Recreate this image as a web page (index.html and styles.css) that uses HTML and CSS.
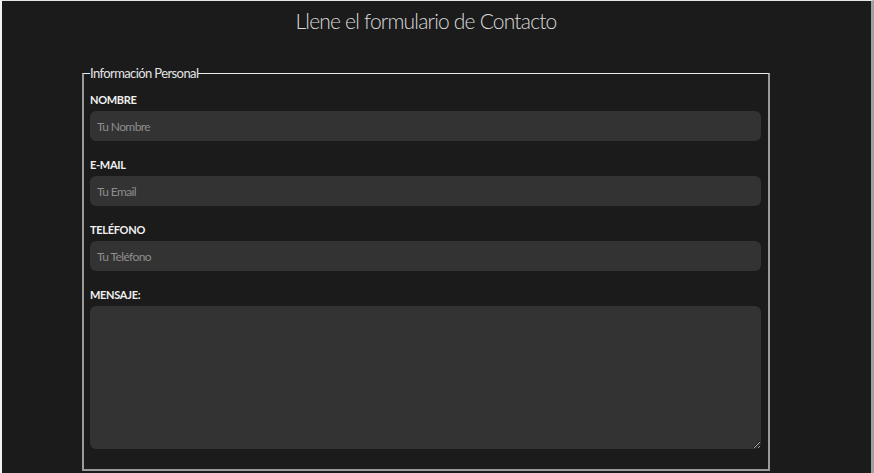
FILE: index.html
```html
<!DOCTYPE html>
<html lang="es">
<head>
<meta charset="utf-8">
<title>Contacto</title>
<link rel="stylesheet" href="styles.css">
</head>
<body>
<div class="page">
  <div class="wrap">
    <h1 class="title">Llene el formulario de Contacto</h1>
    <form class="form">
      <fieldset class="set">
        <legend class="legend">Información Personal</legend>
        <div class="group">
          <label class="label" for="n">NOMBRE</label>
          <input class="field" id="n" type="text" placeholder="Tu Nombre">
        </div>
        <div class="group">
          <label class="label" for="e">E-MAIL</label>
          <input class="field" id="e" type="email" placeholder="Tu Email">
        </div>
        <div class="group">
          <label class="label" for="t">TELÉFONO</label>
          <input class="field" id="t" type="tel" placeholder="Tu Teléfono">
        </div>
        <div class="group">
          <label class="label" for="m">MENSAJE:</label>
          <textarea class="field area" id="m"></textarea>
        </div>
      </fieldset>
    </form>
  </div>
</div>
</body>
</html>
```
FILE: styles.css
```css
html {
  background: #d8d8d8;
}
body {
  margin: 0;
  font-family: Lato, "Noto Sans", sans-serif;
}
.page {
  box-sizing: border-box;
  height: 473px;
  overflow: hidden;
  background: #1b1b1b;
  border-top: 1px solid #e6e6e6;
  border-left: 2px solid #f2f2f2;
  border-right: 3px solid #a0a0a0;
}
.wrap {
  margin-left: 80px;
  width: 688px;
}
.title {
  margin: 0;
  padding-top: 6px;
  height: 64px;
  box-sizing: border-box;
  text-align: center;
  font-weight: 300;
  font-size: 21px;
  line-height: 28px;
  letter-spacing: -0.8px;
  color: #d8d8d8;
}
.form {
  margin: 0;
}
.set {
  margin: 0;
  padding: 12px 7px 20px 6px;
  border: 2px solid #9a9a9a;
  border-top: 1px solid #eeeeee;
  min-width: 0;
}
.legend {
  padding: 0;
  font-size: 13px;
  line-height: 16px;
  letter-spacing: -0.6px;
  color: #e4e4e4;
}
.group {
  display: flex;
  flex-direction: column;
  margin-bottom: 17px;
}
.group:last-child {
  margin-bottom: 0;
}
.label {
  font-weight: 700;
  font-size: 11px;
  line-height: 14px;
  letter-spacing: -0.3px;
  color: #f0f0f0;
  margin-bottom: 4px;
}
.field {
  box-sizing: border-box;
  height: 30px;
  width: 100%;
  border: none;
  border-radius: 6px;
  background: #333333;
  padding: 0 7px;
  font-family: Lato, "Noto Sans", sans-serif;
  font-size: 12px;
  letter-spacing: -0.6px;
  color: #cfcfcf;
  outline: none;
}
.field::placeholder {
  color: #8e8e8e;
}
.area {
  height: 143px;
  resize: both;
  display: block;
}
```
